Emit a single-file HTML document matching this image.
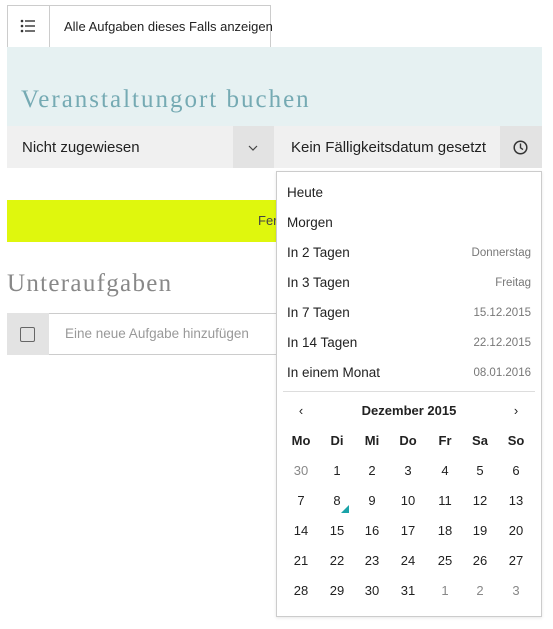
<!DOCTYPE html>
<html><head><meta charset="utf-8"><style>
*{box-sizing:border-box;margin:0;padding:0}
body{width:553px;height:629px;background:#fff;font-family:"Liberation Sans",sans-serif;color:#222;position:relative;overflow:hidden;font-size:14px}
.a{position:absolute}
.dd div.it{position:absolute;left:10px;right:10px;height:30px;line-height:30px;font-size:13.5px}
.it span{position:absolute;right:0;font-size:11.5px;color:#777}
.cal span{position:absolute;width:30px;text-align:center;font-size:13px;transform:translateX(-15px)}
</style></head><body>
<div class="a" style="left:7px;top:5px;width:264px;height:43px;border:1px solid #ccc;border-bottom:none;background:#fff"></div>
<div class="a" style="left:49px;top:5px;width:1px;height:42px;background:#ccc"></div>
<svg class="a" style="left:20px;top:19px" width="16" height="14"><g fill="#333"><circle cx="2" cy="2" r="1.3"/><circle cx="2" cy="7" r="1.3"/><circle cx="2" cy="12" r="1.3"/><rect x="5" y="1.3" width="10" height="1.4"/><rect x="5" y="6.3" width="10" height="1.4"/><rect x="5" y="11.3" width="10" height="1.4"/></g></svg>
<div class="a" style="left:64px;top:19px;font-size:13px">Alle Aufgaben dieses Falls anzeigen</div>
<div class="a" style="left:7px;top:47px;width:535px;height:79px;background:#e6f1f2"></div>
<div class="a" style="left:21px;top:86px;font-family:'Liberation Serif',serif;font-size:25px;color:#75aab3;letter-spacing:2px">Veranstaltungort buchen</div>
<div class="a" style="left:7px;top:126px;width:226px;height:42px;background:#f0f0f0"></div>
<div class="a" style="left:233px;top:126px;width:41px;height:42px;background:#e3e3e3"></div>
<div class="a" style="left:22px;top:139px;font-size:15px">Nicht zugewiesen</div>
<svg class="a" style="left:248px;top:145px" width="10" height="6"><path d="M1 1l4 4 4-4" stroke="#444" fill="none" stroke-width="1.2"/></svg>
<div class="a" style="left:274px;top:126px;width:226px;height:42px;background:#f0f0f0"></div>
<div class="a" style="left:500px;top:126px;width:42px;height:42px;background:#e3e3e3"></div>
<div class="a" style="left:291px;top:139px;font-size:15px">Kein Fälligkeitsdatum gesetzt</div>
<svg class="a" style="left:513px;top:140px" width="15" height="15"><circle cx="7.5" cy="7.5" r="6.3" stroke="#333" stroke-width="1.5" fill="none"/><path d="M7.5 3.5v4.3l2.5 1.8" stroke="#333" stroke-width="1.4" fill="none"/></svg>
<div class="a" style="left:7px;top:200px;width:275px;height:42px;background:#dff70d"></div>
<div class="a" style="left:258px;top:213px;font-size:13px;color:#444">Fer</div>
<div class="a" style="left:7px;top:270px;font-family:'Liberation Serif',serif;font-size:25px;color:#888;letter-spacing:1.3px">Unteraufgaben</div>
<div class="a" style="left:7px;top:313px;width:275px;height:42px;border:1px solid #ccc;background:#fff"></div>
<div class="a" style="left:7px;top:313px;width:42px;height:42px;background:#e3e3e3"></div>
<div class="a" style="left:20px;top:327px;width:15px;height:15px;border:1.5px solid #666;border-radius:2px"></div>
<div class="a" style="left:65px;top:326px;font-size:13.5px;color:#999">Eine neue Aufgabe hinzufügen</div>
<div class="a dd" style="left:276px;top:171px;width:266px;height:446px;border:1px solid #ccc;background:#fff;box-shadow:0 1px 3px rgba(0,0,0,.1)">
<div class="it" style="top:6px">Heute</div>
<div class="it" style="top:36px">Morgen</div>
<div class="it" style="top:66px">In 2 Tagen<span>Donnerstag</span></div>
<div class="it" style="top:96px">In 3 Tagen<span>Freitag</span></div>
<div class="it" style="top:126px">In 7 Tagen<span>15.12.2015</span></div>
<div class="it" style="top:156px">In 14 Tagen<span>22.12.2015</span></div>
<div class="it" style="top:186px">In einem Monat<span>08.01.2016</span></div>
<div class="a" style="left:6px;right:6px;top:219px;height:1px;background:#ddd"></div>
</div>
<div class="a cal" style="left:0;top:0">
<span style="left:301px;top:403px">‹</span><span style="left:409px;top:403px;width:120px;transform:translateX(-60px);font-weight:bold">Dezember 2015</span><span style="left:516px;top:403px">›</span>
</div>
<div class="a" style="left:341px;top:505px;width:0;height:0;border-left:8px solid transparent;border-bottom:8px solid #1aa3a8"></div>
<div id="c" class="a cal"></div>
<script>
var xs=[301,337,372,408,445,480,516],h=["Mo","Di","Mi","Do","Fr","Sa","So"],s="";
h.forEach(function(t,i){s+='<span style="left:'+xs[i]+'px;top:433px;font-weight:bold">'+t+'</span>'});
var d=[30];for(var i=1;i<=31;i++)d.push(i);d.push(1,2,3);
d.forEach(function(t,k){var r=Math.floor(k/7),c=k%7,g=(k==0||k>31);s+='<span style="left:'+xs[c]+'px;top:'+(463+r*30)+'px;color:'+(g?'#888':'#222')+'">'+t+'</span>'});
document.getElementById("c").innerHTML=s;
</script>
</body></html>
